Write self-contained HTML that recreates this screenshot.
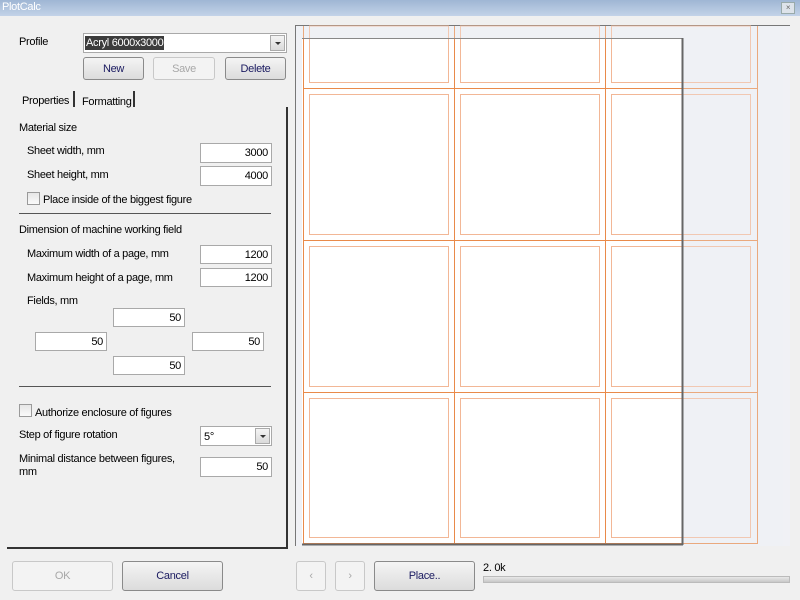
<!DOCTYPE html>
<html><head><style>
*{margin:0;padding:0;box-sizing:border-box}
body{width:800px;height:600px;overflow:hidden;background:#f0f0f0;font-family:"Liberation Sans",sans-serif;font-size:11px;color:#000;position:relative;letter-spacing:-0.3px}
.a{position:absolute;white-space:nowrap}
.t{padding-top:2px}
.in{position:absolute;background:#fff;border:1px solid #a9a9a9;text-align:right;padding-right:3px;line-height:19px;font-size:11px}
.btn{position:absolute;border:1px solid #8a8a8a;border-radius:3px;background:linear-gradient(#f4f4f4,#dcdcdc);text-align:center;color:#1a1a60;font-size:11px}
.dis{border-color:#c8c8c8;background:#f3f3f3;color:#a8a8a8}
.cb{position:absolute;width:13px;height:13px;border:1px solid #9a9a9a;background:linear-gradient(#e6e6e6,#fafafa)}
.dd{position:absolute;width:15px;border:1px solid #aaa;background:linear-gradient(#f4f4f4,#dadada)}
.dd:after{content:"";position:absolute;left:4px;top:6px;border-left:3px solid transparent;border-right:3px solid transparent;border-top:3px solid #333}
</style></head><body>
<div class="a" style="left:0;top:0;width:800px;height:16px;background:linear-gradient(#9fb6d4,#c3d3e8)"></div>
<div class="a" style="left:2px;top:1px;color:#fff;font-size:11px">PlotCalc</div>
<div class="a" style="left:781px;top:2px;width:14px;height:12px;border:1px solid #9aa;background:#dde3ea;font-size:8px;text-align:center;line-height:10px;color:#666">×</div>

<div class="a t" style="left:19px;top:34px">Profile</div>
<div class="a" style="left:83px;top:33px;width:204px;height:20px;background:#fff;border:1px solid #a9a9a9"></div>
<div class="a" style="left:85px;top:36px;background:#3c3c3c;color:#fff;padding:1px 1px 0;line-height:13px;height:14px">Acryl 6000x3000</div>
<div class="dd" style="left:270px;top:35px;height:16px"></div>
<div class="btn" style="left:83px;top:57px;width:61px;height:23px;line-height:22px">New</div>
<div class="btn dis" style="left:153px;top:57px;width:62px;height:23px;line-height:22px">Save</div>
<div class="btn" style="left:225px;top:57px;width:61px;height:23px;line-height:22px">Delete</div>

<div class="a t" style="left:22px;top:93px">Properties</div>
<div class="a" style="left:73px;top:91px;width:2px;height:16px;background:#333"></div>
<div class="a t" style="left:82px;top:94px">Formatting</div>
<div class="a" style="left:133px;top:91px;width:2px;height:16px;background:#333"></div>
<div class="a" style="left:286px;top:107px;width:2px;height:441px;background:#333"></div>
<div class="a" style="left:7px;top:547px;width:281px;height:2px;background:#333"></div>

<div class="a t" style="left:19px;top:120px">Material size</div>
<div class="a t" style="left:27px;top:143px">Sheet width, mm</div>
<div class="in" style="left:200px;top:143px;width:72px;height:20px">3000</div>
<div class="a t" style="left:27px;top:167px">Sheet height, mm</div>
<div class="in" style="left:200px;top:166px;width:72px;height:20px">4000</div>
<div class="cb" style="left:27px;top:192px"></div>
<div class="a t" style="left:43px;top:192px">Place inside of the biggest figure</div>
<div class="a" style="left:19px;top:213px;width:252px;height:1px;background:#555"></div>

<div class="a t" style="left:19px;top:222px">Dimension of machine working field</div>
<div class="a t" style="left:27px;top:246px">Maximum width of a page, mm</div>
<div class="in" style="left:200px;top:245px;width:72px;height:19px">1200</div>
<div class="a t" style="left:27px;top:270px">Maximum height of a page, mm</div>
<div class="in" style="left:200px;top:268px;width:72px;height:19px">1200</div>
<div class="a t" style="left:27px;top:293px">Fields, mm</div>
<div class="in" style="left:113px;top:308px;width:72px;height:19px">50</div>
<div class="in" style="left:35px;top:332px;width:72px;height:19px">50</div>
<div class="in" style="left:192px;top:332px;width:72px;height:19px">50</div>
<div class="in" style="left:113px;top:356px;width:72px;height:19px">50</div>
<div class="a" style="left:19px;top:386px;width:252px;height:1px;background:#555"></div>

<div class="cb" style="left:19px;top:404px"></div>
<div class="a t" style="left:35px;top:405px">Authorize enclosure of figures</div>
<div class="a t" style="left:19px;top:427px">Step of figure rotation</div>
<div class="a" style="left:200px;top:426px;width:72px;height:20px;background:#fff;border:1px solid #a9a9a9;padding-left:3px;line-height:20px">5°</div>
<div class="dd" style="left:255px;top:428px;height:16px"></div>
<div class="a t" style="left:19px;top:451px">Minimal distance between figures,</div>
<div class="a t" style="left:19px;top:464px">mm</div>
<div class="in" style="left:200px;top:457px;width:72px;height:20px">50</div>

<svg class="a" style="left:0;top:0" width="800" height="600">
<rect x="296" y="26" width="494" height="520" fill="#f0f1f5"/>
<line x1="295.5" y1="25" x2="295.5" y2="546" stroke="#777"/>
<line x1="295" y1="25.5" x2="790" y2="25.5" stroke="#777"/>
<rect x="302" y="38" width="380" height="506" fill="#fff"/>
<g fill="none" stroke="#e98a4a">
<line x1="303.5" y1="26" x2="303.5" y2="544"/>
<line x1="454.5" y1="26" x2="454.5" y2="544"/>
<line x1="605.5" y1="26" x2="605.5" y2="544"/>
<line x1="757.5" y1="26" x2="757.5" y2="544"/>
<line x1="303" y1="88.5" x2="758" y2="88.5"/>
<line x1="303" y1="240.5" x2="758" y2="240.5"/>
<line x1="303" y1="392.5" x2="758" y2="392.5"/>
<line x1="303" y1="543.5" x2="758" y2="543.5"/>
</g>
<g fill="none" stroke="#f2b796">
<rect x="309.5" y="26" width="139" height="56.5"/>
<rect x="460.5" y="26" width="139" height="56.5"/>
<rect x="611.5" y="26" width="139" height="56.5"/>
<rect x="309.5" y="94.5" width="139" height="140"/>
<rect x="460.5" y="94.5" width="139" height="140"/>
<rect x="611.5" y="94.5" width="139" height="140"/>
<rect x="309.5" y="246.5" width="139" height="140"/>
<rect x="460.5" y="246.5" width="139" height="140"/>
<rect x="611.5" y="246.5" width="139" height="140"/>
<rect x="309.5" y="398.5" width="139" height="139"/>
<rect x="460.5" y="398.5" width="139" height="139"/>
<rect x="611.5" y="398.5" width="139" height="139"/>
</g>
<rect x="683" y="26" width="100" height="520" fill="#f0f1f5" opacity="0.3"/>
<rect x="296" y="26" width="387" height="12" fill="#f0f1f5" opacity="0.3"/>
<line x1="302" y1="38.5" x2="682" y2="38.5" stroke="#888"/>
<line x1="682.5" y1="38" x2="682.5" y2="545" stroke="#666" stroke-width="2"/>
<line x1="302" y1="544.5" x2="683" y2="544.5" stroke="#666" stroke-width="2"/>
</svg>

<div class="btn dis" style="left:12px;top:561px;width:101px;height:30px;line-height:29px">OK</div>
<div class="btn" style="left:122px;top:561px;width:101px;height:30px;line-height:29px">Cancel</div>
<div class="btn dis" style="left:296px;top:561px;width:30px;height:30px;line-height:29px">‹</div>
<div class="btn dis" style="left:335px;top:561px;width:30px;height:30px;line-height:29px">›</div>
<div class="btn" style="left:374px;top:561px;width:101px;height:30px;line-height:29px">Place..</div>
<div class="a t" style="left:483px;top:560px">2. 0k</div>
<div class="a" style="left:483px;top:576px;width:307px;height:7px;border:1px solid #bbb;background:linear-gradient(#e8e8e8,#c8c8c8)"></div>
</body></html>
